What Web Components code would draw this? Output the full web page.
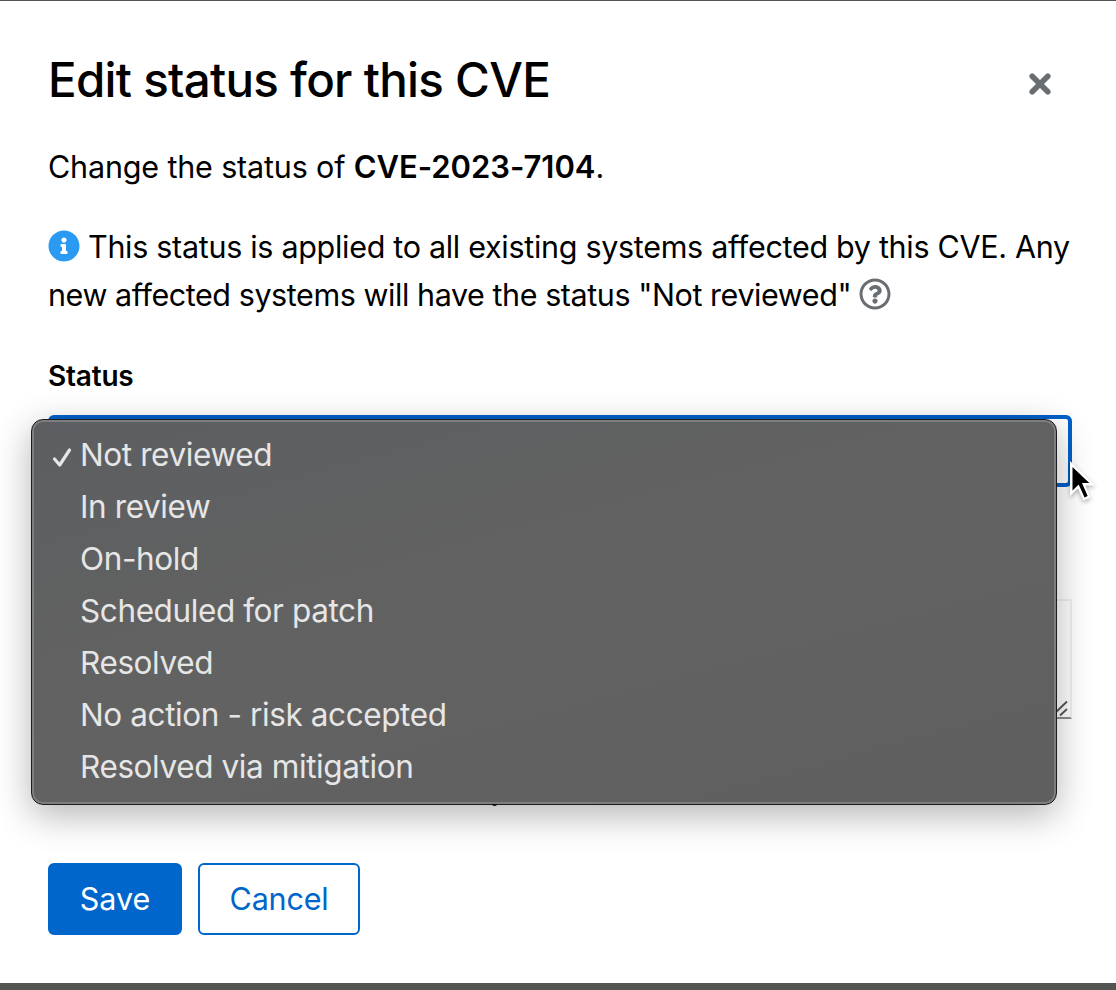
<!DOCTYPE html>
<html lang="en">
<head>
<meta charset="utf-8">
<title>Edit status for this CVE</title>
<style>
  html, body { margin: 0; height: 100%; overflow: hidden; }
  body { background: #535553; color: #000; font: 400 30.5px/48px Inter, "Liberation Sans", sans-serif; }
  b { font-weight: 600; font-size: 31px; letter-spacing: -.05px; }
</style>
</head>
<body>
<status-modal>
  <span slot="title">Edit status for this CVE</span>
  <modal-text>
    <span style="letter-spacing:-.16px">Change the status of <b>CVE-2023-7104</b>.</span>
  </modal-text>
  <modal-text>
    <span style="letter-spacing:-.3px"><info-icon></info-icon>This status is applied to all existing systems affected by this CVE. Any</span><br>
    <span style="letter-spacing:-.43px">new affected systems will have the status "Not reviewed"<help-icon></help-icon></span>
  </modal-text>
  <status-field label="Status">
    <option-menu slot="menu">
      <menu-option checked>Not reviewed</menu-option>
      <menu-option>In review</menu-option>
      <menu-option>On-hold</menu-option>
      <menu-option>Scheduled for patch</menu-option>
      <menu-option>Resolved</menu-option>
      <menu-option>No action - risk accepted</menu-option>
      <menu-option>Resolved via mitigation</menu-option>
    </option-menu>
  </status-field>
  <note-area></note-area>
  <action-button slot="actions" primary>Save</action-button>
  <action-button slot="actions">Cancel</action-button>
</status-modal>

<script>
const define = (name, html) => customElements.define(name, class extends HTMLElement {
  constructor() {
    super();
    this.attachShadow({ mode: "open" }).innerHTML =
      html.replace("{label}", this.getAttribute("label") || "");
  }
});

define("status-modal", `
<style>
  :host { display: flex; flex-direction: column; box-sizing: border-box; height: 982px; margin-top: 1px;
    padding: 48px 44px 48px 48px; background: #fff; }
  header { display: flex; justify-content: space-between; height: 62px; margin-bottom: 32px; }
  h1 { margin: 0; font-weight: 500; font-size: 47.5px; line-height: 62px; letter-spacing: -.72px; white-space: nowrap; }
  .close { width: 22px; height: 22px; margin: 24px 21px 0 0; }
  main { display: flex; flex-direction: column; flex: 1; }
  footer { display: flex; gap: 16px; }
</style>
<header>
  <h1><slot name="title"></slot></h1>
  <svg class="close" viewBox="0 0 22 22"><path d="M3.2 3.2 18.8 18.8M18.8 3.2 3.2 18.8" stroke="#6a6e73" stroke-width="5.6" stroke-linecap="round"/></svg>
</header>
<main><slot></slot></main>
<footer><slot name="actions"></slot></footer>`);

define("modal-text", `
<style>
  :host { display: block; margin-bottom: 32px; white-space: nowrap; }
  ::slotted(span) { white-space: nowrap; }
</style>
<slot></slot>`);

define("info-icon", `
<style>:host { display: inline-block; width: 32px; height: 32px; margin-right: 8px; vertical-align: -4px; line-height: 0; }</style>
<svg width="32" height="32" viewBox="0 0 512 512"><path fill="#2b9af3" d="M256 8C119 8 8 119.100 8 256c0 137 111 248 248 248s248-111 248-248C504 119.100 393 8 256 8zm0 110c23.200 0 42 18.800 42 42s-18.800 42-42 42-42-18.800-42-42 18.800-42 42-42zm56 254c0 6.600-5.400 12-12 12h-88c-6.600 0-12-5.400-12-12v-24c0-6.600 5.400-12 12-12h12v-64h-12c-6.600 0-12-5.400-12-12v-24c0-6.600 5.400-12 12-12h64c6.600 0 12 5.400 12 12v100h12c6.600 0 12 5.400 12 12v24z"/></svg>`);

define("help-icon", `
<style>:host { display: inline-block; width: 32px; height: 32px; margin-left: 8px; vertical-align: -4px; line-height: 0; }</style>
<svg width="32" height="32" viewBox="0 0 512 512"><path fill="#6a6e73" d="M256 8C119.043 8 8 119.083 8 256c0 136.997 111.043 248 248 248s248-111.003 248-248C504 119.083 392.957 8 256 8zm0 448c-110.532 0-200-89.431-200-200 0-110.495 89.472-200 200-200 110.491 0 200 89.471 200 200 0 110.530-89.431 200-200 200zm107.244-255.200c0 67.052-72.421 68.084-72.421 92.863V300c0 6.627-5.373 12-12 12h-45.647c-6.627 0-12-5.373-12-12v-8.659c0-35.745 27.100-50.034 47.579-61.516 17.561-9.845 28.324-16.541 28.324-29.579 0-17.246-21.999-28.693-39.784-28.693-23.189 0-33.894 10.977-48.942 29.969-4.057 5.120-11.460 6.071-16.666 2.124l-27.824-21.098c-5.107-3.872-6.251-11.066-2.644-16.363C184.846 131.491 214.940 112 261.794 112c49.071 0 101.450 38.304 101.450 88.800zM298 368c0 23.159-18.841 42-42 42s-42-18.841-42-42 18.841-42 42-42 42 18.841 42 42z"/></svg>`);

define("status-field", `
<style>
  :host { display: block; position: relative; margin-top: 4px; }
  .label { height: 42px; margin-bottom: 18px; font-weight: 600; font-size: 28px; line-height: 42px; letter-spacing: -.2px; }
  .select { box-sizing: border-box; height: 72px; border: 4px solid #0060c9; border-radius: 6px; background: #fff; }
  .cursor { position: absolute; z-index: 3; left: 1018px; top: 103px; }
  ::slotted(option-menu) { position: absolute; z-index: 2; left: -17px; top: 64px; }
</style>
<div class="label">{label}</div>
<div class="select"></div>
<slot name="menu"></slot>
<svg class="cursor" width="34" height="50" viewBox="0 0 34 50" style="filter:drop-shadow(0 2px 2px rgba(0,0,0,.3))">
  <path d="M4 3V38L12 30.500 17.500 42.500 24.500 39.500 19.500 27.500H29Z" fill="#fff"/>
  <path d="M6.500 9V32.500L12.700 26.500 18.500 39.500 21.700 38 16 25H23.300Z" fill="#000"/>
</svg>`);

define("option-menu", `
<style>
  :host { display: block; box-sizing: border-box; width: 1026px; height: 386px; padding: 9px 0 0 17px; color: #e6e6e6;
    background: linear-gradient(165deg, #5c5e61 0%, #5f6061 20%, #626262 50%, #5f5f5f 100%); border: 1px solid #1c1d1e; border-radius: 12px;
    box-shadow: inset 0 0 0 2px #7d7e7f, 0 10px 36px rgba(0,0,0,.3); }
  /* descender of the checkbox caption that sits beneath the menu */
  .tail { position: absolute; left: 460px; top: 384px; width: 5px; height: 2px; border-radius: 0 0 2px 2px; background: #111; }
</style>
<slot></slot><i class="tail"></i>`);

define("menu-option", `
<style>
  :host { display: flex; height: 52px; line-height: 52px; font-size: 31.5px; letter-spacing: -.4px; white-space: nowrap; }
  .mark { width: 31px; height: 52px; flex: none; }
  path { display: none; }
  :host([checked]) path { display: block; }
</style>
<svg class="mark" viewBox="0 0 31 52"><path d="M5.500 30 10.700 36 20.500 21" fill="none" stroke="#e6e6e6" stroke-width="3.200" stroke-linecap="round" stroke-linejoin="round"/></svg>
<span><slot></slot></span>`);

define("note-area", `
<style>
  :host { display: block; box-sizing: border-box; height: 120px; margin-top: 112px; border: 2px solid #f0f0f0; border-bottom-color: #8a8d90; background: #fff; }
  div { display: flex; height: 100%; justify-content: flex-end; align-items: flex-end; }
</style>
<div><svg width="16" height="18" viewBox="0 0 16 18"><path d="M1 14 13 2.500M6 16.500 13 10" stroke="#555" stroke-width="1.800"/></svg></div>`);

define("action-button", `
<style>
  :host { display: block; box-sizing: border-box; height: 72px; width: 162px; border: 2px solid #06c; border-radius: 6px;
    background: #fff; color: #06c; text-align: center; line-height: 68px; letter-spacing: -.2px; }
  :host([primary]) { width: 134px; background: #06c; color: #fff; letter-spacing: 0; }
</style>
<slot></slot>`);
</script>
</body>
</html>
